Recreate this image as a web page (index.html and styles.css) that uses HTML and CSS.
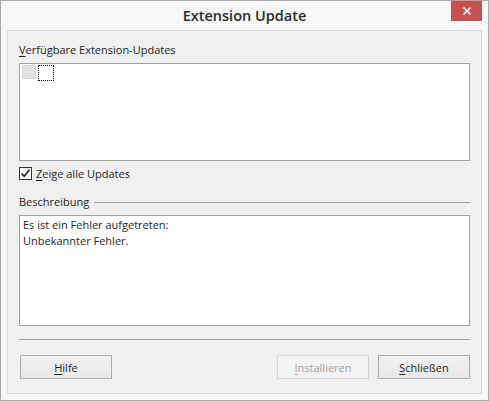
FILE: index.html
```html
<!DOCTYPE html>
<html lang="de">
<head>
    <meta charset="UTF-8">
    <title>Extension Update</title>
    <link rel="stylesheet" href="styles.css">
</head>
<body>
    <div class="window">
        <div class="titlebar">
            <span></span>
            <div class="title">Extension Update</div>
            <button class="close-btn" title="Schließen">
                <svg width="10" height="10" viewBox="0 0 10 10">
                    <path d="M1.5 1.5 L8.5 8.5 M8.5 1.5 L1.5 8.5" stroke="#fff" stroke-width="1.6"/>
                </svg>
            </button>
        </div>

        <div class="client">
            <div class="label"><u>V</u>erfügbare Extension-Updates</div>
            <div class="list-box">
                <div class="list-item">
                    <span class="item-check"></span>
                    <span class="item-focus"></span>
                </div>
            </div>

            <label class="show-all">
                <span class="checkbox">
                    <svg width="11" height="11" viewBox="0 0 11 11">
                        <path d="M1.5 5.5 L4.2 8.3 L9.5 1.8" fill="none" stroke="#222" stroke-width="1.7"/>
                    </svg>
                </span>
                <span><u>Z</u>eige alle Updates</span>
            </label>

            <div class="group-head">
                <span>Beschreibung</span>
                <span class="group-line"></span>
            </div>
            <div class="desc-box">
                <div>Es ist ein Fehler aufgetreten:</div>
                <div>Unbekannter Fehler.</div>
            </div>

            <div class="separator"></div>

            <div class="buttons">
                <button class="btn"><u>H</u>ilfe</button>
                <span class="spacer"></span>
                <button class="btn" disabled><u>I</u>nstallieren</button>
                <button class="btn"><u>S</u>chließen</button>
            </div>
        </div>
    </div>
</body>
</html>
```

FILE: styles.css
```css
:root {
    --frame: #aaaaaa;
    --title-bg: #f7f7f7;
    --panel-bg: #f0f0f0;
    --panel-border: #dadada;
    --box-border: #a0a0a0;
    --text-color: #1e1e1e;
    --close-red: #c75050;
}

* {
    box-sizing: border-box;
}

body {
    margin: 0;
    font-family: 'Open Sans', 'Noto Sans', sans-serif;
    font-size: 11px;
    color: var(--text-color);
    background: #ffffff;
}

.window {
    width: 489px;
    height: 401px;
    border: 1px solid var(--frame);
    background-color: var(--title-bg);
    display: flex;
    flex-direction: column;
}

.titlebar {
    height: 29px;
    display: grid;
    grid-template-columns: 1fr auto 1fr;
    align-items: start;
}

.title {
    font-size: 14.5px;
    font-weight: 600;
    color: #2b2b2b;
    padding-top: 5px;
}

.close-btn {
    justify-self: end;
    margin-right: 6px;
    width: 31px;
    height: 20px;
    border: none;
    padding: 0;
    background-color: var(--close-red);
    display: flex;
    align-items: center;
    justify-content: center;
}

.client {
    flex: 1;
    margin: 0 6px 6px 6px;
    border: 1px solid var(--panel-border);
    background-color: var(--panel-bg);
    padding: 10px 11px 0 11px;
    display: flex;
    flex-direction: column;
}

u {
    text-decoration-thickness: 1px;
    text-underline-offset: 2px;
}

.label {
    line-height: 18px;
    margin-bottom: 4px;
}

.list-box {
    height: 98px;
    border: 1px solid var(--box-border);
    background: #ffffff;
    padding: 1px 2px;
}

.list-item {
    display: flex;
    gap: 2px;
}

.item-check {
    width: 14px;
    height: 14px;
    background-color: #e2e2e2;
    border: 1px solid #d4d4d4;
}

.item-focus {
    width: 16px;
    height: 16px;
    border: 1px dotted #000;
}

.show-all {
    display: flex;
    align-items: center;
    gap: 4px;
    margin-top: 3px;
    height: 18px;
}

.checkbox {
    width: 13px;
    height: 13px;
    border: 1px solid #333;
    background: #ffffff;
    display: flex;
    align-items: center;
    justify-content: center;
}

.group-head {
    display: flex;
    align-items: center;
    gap: 5px;
    margin-top: 11px;
    line-height: 18px;
}

.group-line {
    flex: 1;
    height: 1px;
    background-color: #a0a0a0;
    margin-top: 1px;
}

.desc-box {
    height: 111px;
    margin-top: 4px;
    border: 1px solid var(--box-border);
    background: #ffffff;
    padding: 1px 3px;
    line-height: 16px;
}

.separator {
    height: 1px;
    background-color: #a0a0a0;
    margin-top: 13px;
}

.buttons {
    display: flex;
    gap: 9px;
    margin-top: 15px;
    padding-left: 1px;
}

.spacer {
    flex: 1;
}

.btn {
    width: 92px;
    height: 24px;
    font-family: inherit;
    font-size: 11px;
    color: var(--text-color);
    background: linear-gradient(#f2f2f2, #e8e8e8);
    border: 1px solid #acacac;
    padding: 0;
}

.btn:disabled {
    color: #a0a0a0;
    background: #f4f4f4;
    border-color: #d5d5d5;
}
```
